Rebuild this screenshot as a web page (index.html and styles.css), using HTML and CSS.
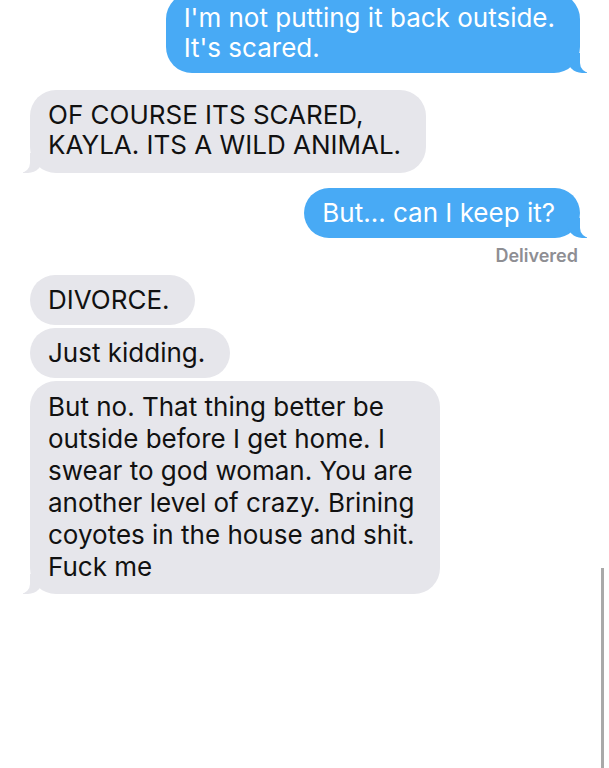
FILE: index.html
```html
<!DOCTYPE html>
<html lang="en">
<head>
  <meta charset="UTF-8" />
  <title>Messages</title>
  <link rel="stylesheet" href="styles.css">
</head>
<body>

  <div class="thread">
    <div class="msg sent tail first">I'm not putting it back outside.<br>It's scared.</div>
    <div class="msg received tail gap">OF COURSE ITS SCARED,<br>KAYLA. ITS A WILD ANIMAL.</div>
    <div class="msg sent tail gap-sm">But... can I keep it?</div>
    <div class="status">Delivered</div>
    <div class="msg received after-status">DIVORCE.</div>
    <div class="msg received stack">Just kidding.</div>
    <div class="msg received tail stack long">But no. That thing better be<br>outside before I get home. I<br>swear to god woman. You are<br>another level of crazy. Brining<br>coyotes in the house and shit.<br>Fuck me</div>
  </div>

  <div class="scrollbar"></div>

</body>
</html>
```

FILE: styles.css
```css
body {
  margin: 0;
  background-color: #fff;
  font-family: Inter, "Liberation Sans", Arial, sans-serif;
  overflow: hidden;
}
.thread {
  display: flex;
  flex-direction: column;
  padding: 0 29px 0 30px;
}
.msg {
  position: relative;
  padding: 10px 25px 10px 18px;
  border-radius: 26px;
  font-size: 26px;
  line-height: 30px;
  white-space: nowrap;
}
.sent {
  align-self: flex-end;
  background-color: #48aaf5;
  color: #fff;
}
.received {
  align-self: flex-start;
  background-color: #e6e6eb;
  color: #111;
}
.first { margin-top: -7px; }
.gap {
  margin-top: 17px;
  padding-bottom: 13px;
}
.gap-sm { margin-top: 15px; }
.after-status { margin-top: 9px; }
.stack { margin-top: 3px; }
.long {
  line-height: 32px;
  padding-top: 10px;
  padding-bottom: 11px;
}

/* bubble tails */
.tail::before,
.tail::after {
  content: "";
  position: absolute;
  bottom: 0;
  height: 20px;
}
.received.tail::before {
  left: -7px;
  width: 20px;
  background-color: #e6e6eb;
  border-bottom-right-radius: 15px;
}
.received.tail::after {
  left: -10px;
  width: 10px;
  background-color: #fff;
  border-bottom-right-radius: 10px;
}
.sent.tail::before {
  right: -7px;
  width: 20px;
  background-color: #48aaf5;
  border-bottom-left-radius: 15px;
}
.sent.tail::after {
  right: -10px;
  width: 10px;
  background-color: #fff;
  border-bottom-left-radius: 10px;
}

.status {
  align-self: flex-end;
  margin-top: 8px;
  margin-right: 2px;
  font-size: 18px;
  font-weight: 600;
  line-height: 20px;
  color: #8e8e93;
}

.scrollbar {
  position: absolute;
  right: 5px;
  top: 568px;
  bottom: 0;
  width: 3px;
  background-color: #a9a9a9;
}
```
